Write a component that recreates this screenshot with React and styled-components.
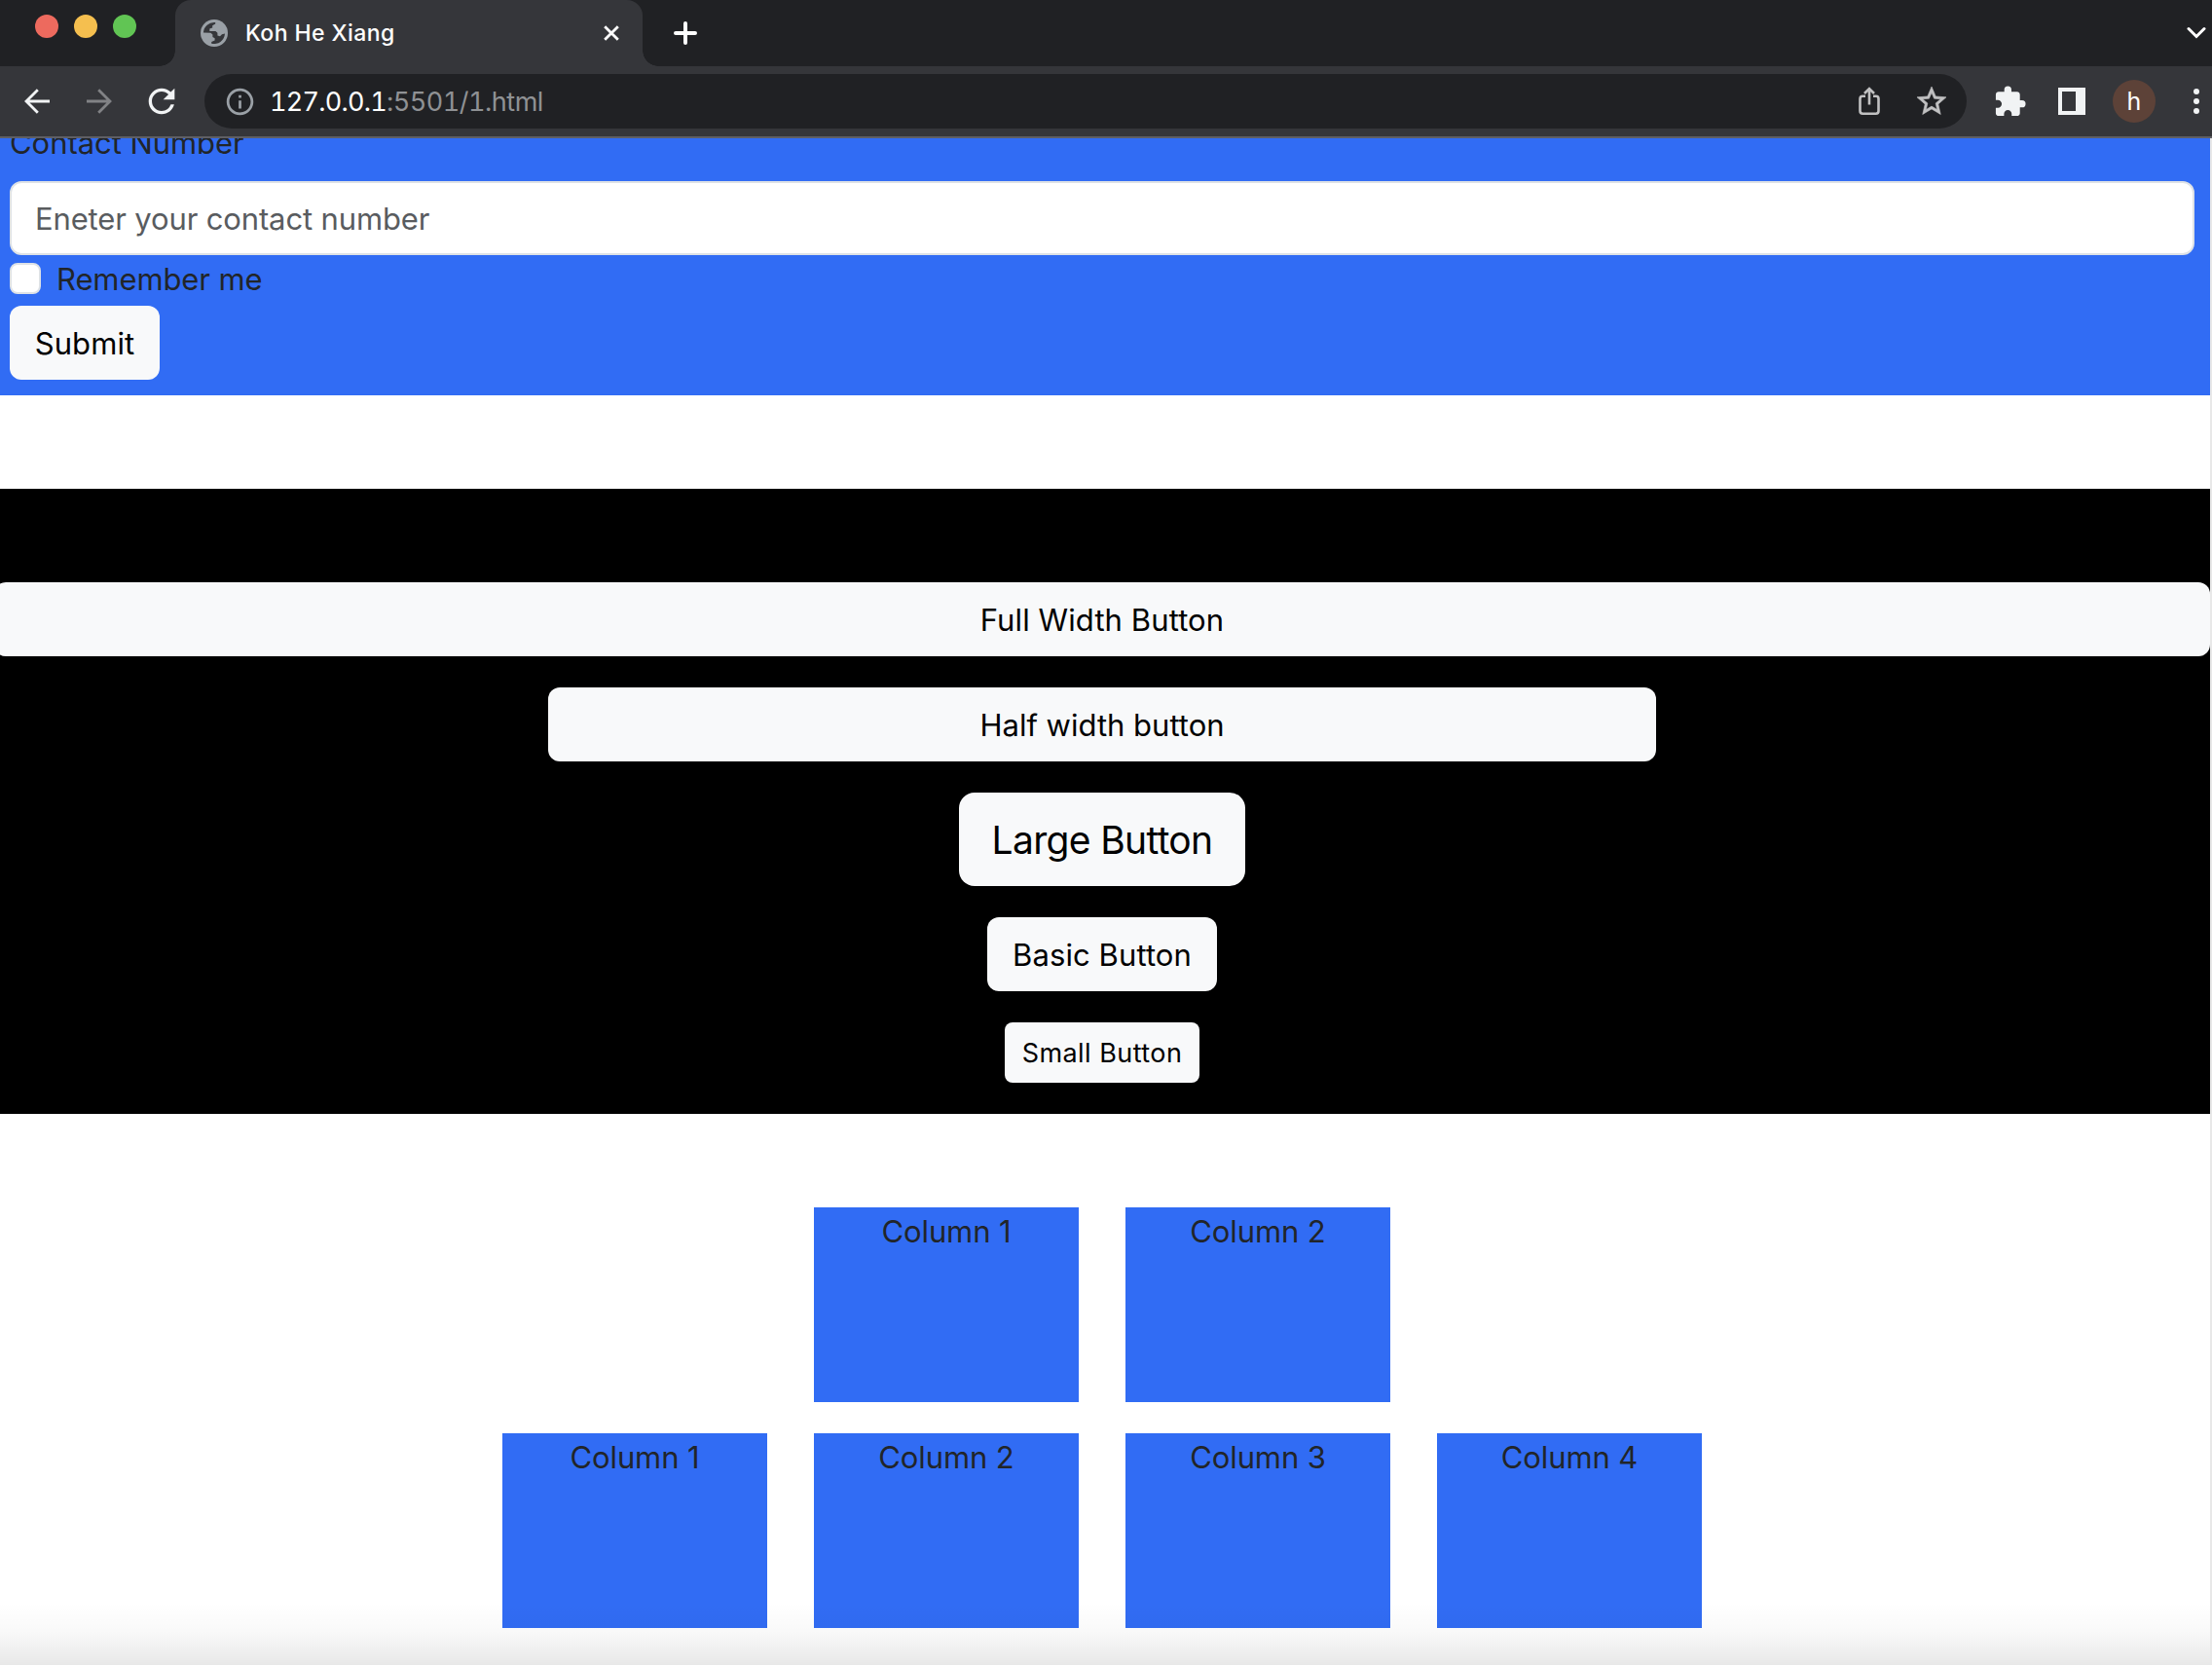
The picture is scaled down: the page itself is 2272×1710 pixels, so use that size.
import React from "react";
import styled, { createGlobalStyle } from "styled-components";
import { MdRefresh, MdInfoOutline, MdExtension } from "react-icons/md";

const GlobalStyle = createGlobalStyle`
  *, *::before, *::after { box-sizing: border-box; }
  body {
    margin: 0;
    overflow: hidden;
    font-family: Inter, "Liberation Sans", sans-serif;
    font-size: 31px;
    line-height: 48px;
    color: #212529;
    background: #fff;
  }
  svg { display: block; flex: none; }
`;

const Browser = styled.div`
  display: flex;
  flex-direction: column;
  width: 2272px;
  height: 1710px;
`;

/* ---------- browser chrome ---------- */

const TabStrip = styled.header`
  display: flex;
  align-items: stretch;
  height: 68px;
  flex: none;
  background: #202124;
  color: #fff;
`;

const WindowControls = styled.div`
  display: flex;
  gap: 16px;
  width: 180px;
  padding: 15px 0 0 36px;
`;

const Light = styled.span`
  width: 24px;
  height: 24px;
  border-radius: 50%;
  background: ${(p) => p.$color};
`;

const Tab = styled.div`
  position: relative;
  display: flex;
  align-items: center;
  width: 480px;
  padding: 0 24px 0 26px;
  border-radius: 16px 16px 0 0;
  background: #35363a;

  &::before,
  &::after {
    content: "";
    position: absolute;
    bottom: 0;
    width: 16px;
    height: 16px;
  }
  &::before {
    right: 100%;
    background: radial-gradient(circle at 0 0, transparent 15.5px, #35363a 16px);
  }
  &::after {
    left: 100%;
    background: radial-gradient(circle at 100% 0, transparent 15.5px, #35363a 16px);
  }
`;

const TabTitle = styled.span`
  flex: 1;
  margin-left: 18px;
  font-size: 23px;
  font-weight: 450;
  letter-spacing: 0.42px;
  line-height: 32px;
`;

const NewTab = styled.div`
  display: flex;
  align-items: center;
  flex: 1;
  padding-left: 32px;
`;

const TabSearch = styled.div`
  display: flex;
  align-items: center;
  padding-right: 6px;
`;

const Toolbar = styled.div`
  display: flex;
  align-items: center;
  height: 74px;
  flex: none;
  padding: 0 13px 0 24px;
  border-bottom: 2px solid #5f5f64;
  background: #35363a;
`;

const NavButtons = styled.div`
  display: flex;
  align-items: center;
  width: 186px;
  color: #f1f3f4;
`;

const NavSlot = styled.span`
  width: ${(p) => p.$width}px;
  color: ${(p) => p.$color || "inherit"};
`;

const AddressBar = styled.div`
  display: flex;
  align-items: center;
  width: 1810px;
  height: 56px;
  padding: 0 18px 0 20px;
  border-radius: 28px;
  background: #202124;
  color: #9aa0a6;
`;

const Url = styled.div`
  flex: 1;
  margin-left: 14px;
  padding-top: 1px;
  font-size: 27px;
  font-variant-numeric: tabular-nums;
  letter-spacing: -0.5px;
  line-height: 40px;
  color: #8f9194;
`;

const Host = styled.span`
  color: #fff;
  letter-spacing: -0.75px;
`;

const BarActions = styled.div`
  display: flex;
  align-items: center;
  gap: 35px;
  color: #c1c1c2;
`;

const Extensions = styled.div`
  display: flex;
  align-items: center;
  margin-left: 27px;
  color: #f1f3f4;
`;

const SidePanelIcon = styled.span`
  width: 28px;
  height: 28px;
  margin: 0 28px 0 32px;
  border: solid #f1f3f4;
  border-width: 4px 10px 4px 4px;
`;

const Avatar = styled.span`
  width: 44px;
  height: 44px;
  margin-right: 39px;
  border-radius: 50%;
  background: #5d4238;
  color: #fff;
  font-size: 25px;
  line-height: 44px;
  text-align: center;
`;

/* ---------- page ---------- */

const Page = styled.main`
  position: relative;
  display: flex;
  flex-direction: column;
  flex: 1;
  min-height: 0;
  overflow: hidden;
  border-right: 2px solid #e8e8e8;

  &::after {
    content: "";
    position: absolute;
    inset: auto 0 0 0;
    height: 64px;
    background: linear-gradient(rgba(0, 0, 0, 0), rgba(0, 0, 0, 0.025) 45%, rgba(0, 0, 0, 0.09));
  }
`;

const ContactForm = styled.form`
  display: flex;
  flex-direction: column;
  align-items: flex-start;
  height: 264px;
  flex: none;
  padding: 0 16px 0 10px;
  background: #316cf4;
`;

const FieldLabel = styled.label`
  margin: -20px 0 16px;
  padding-top: 1px;
  height: 48px;
  letter-spacing: -0.05px;
`;

const TextInput = styled.input`
  width: 100%;
  height: 76px;
  padding: 1px 24px 0;
  border: 2px solid #dee2e6;
  border-radius: 12px;
  background: #fff;
  font: inherit;
  letter-spacing: -0.14px;

  &::placeholder {
    color: #595c5f;
    opacity: 1;
  }
`;

const CheckRow = styled.label`
  display: flex;
  align-items: center;
  gap: 16px;
  height: 48px;
  margin-bottom: 4px;
  letter-spacing: -0.1px;
`;

const CheckText = styled.span`
  padding-top: 2px;
`;

const CheckBox = styled.input`
  appearance: none;
  width: 32px;
  height: 32px;
  margin: 0;
  border: 2px solid #dee2e6;
  border-radius: 8px;
  background: #fff;
`;

const sizes = {
  small: { height: 62, font: 27, radius: 8, spacing: 0.45 },
  basic: { height: 76, font: 31, radius: 12, spacing: 0.1 },
  large: { height: 96, font: 39, radius: 16, spacing: -0.65 },
};

const Button = styled.button`
  flex: none;
  width: ${(p) => p.$width}px;
  height: ${(p) => sizes[p.$size || "basic"].height}px;
  padding: 1px 0 0;
  border: 0;
  border-radius: ${(p) => sizes[p.$size || "basic"].radius}px;
  background: #f8f9fa;
  color: #000;
  font-family: inherit;
  font-size: ${(p) => sizes[p.$size || "basic"].font}px;
  letter-spacing: ${(p) => p.$spacing ?? sizes[p.$size || "basic"].spacing}px;
  line-height: 48px;
  text-align: center;
`;

const ButtonStack = styled.section`
  display: flex;
  flex-direction: column;
  align-items: center;
  gap: 32px;
  height: 642px;
  flex: none;
  margin: 96px 0 96px;
  padding: 96px 6px 32px 0;
  background: #000;
`;

const Grid = styled.section`
  display: flex;
  flex-direction: column;
  gap: 32px;
  padding-right: 6px;
`;

const GridRow = styled.div`
  display: flex;
  justify-content: center;
  gap: 48px;
`;

const Column = styled.div`
  width: 272px;
  height: 200px;
  padding-top: 1px;
  background: #316cf4;
  text-align: center;
  letter-spacing: -0.1px;
`;

/* ---------- icons ---------- */

const Stroke = ({ w, h, d, width = 2.8, cap = "butt" }) => (
  <svg width={w} height={h} viewBox={`0 0 ${w} ${h}`} fill="none" stroke="currentColor" strokeWidth={width} strokeLinecap={cap}>
    <path d={d} />
  </svg>
);

const Globe = () => (
  <svg width="28" height="28" viewBox="0 0 28 28">
    <circle cx="14" cy="14" r="14" fill="#9aa0a6" />
    <path
      fill="#35363a"
      d="M2.9 13.6A11.1 11.1 0 0 1 15.2 3V4.6L12.2 6.2V8.6L9.3 9.6V11.9H15.4L17.4 13.8V16.4L20 17.2L22 15.2L25 14.6A11.1 11.1 0 0 1 11.2 24.7V23L14.6 21.4V19.2L12.4 18V15.6L10.4 13.8Z"
    />
  </svg>
);

const Share = () => (
  <svg width="22" height="30" viewBox="0 0 22 30" fill="none" stroke="currentColor" strokeWidth="2.6">
    <path d="M7 9.8H4.2Q1.5 9.8 1.5 12.5V25Q1.5 27.7 4.2 27.7H17.8Q20.5 27.7 20.5 25V12.5Q20.5 9.8 17.8 9.8H15M11 18.5V2.5M6 7L11 2L16 7" />
  </svg>
);

const Star = () => (
  <svg width="36" height="36" viewBox="0 0 24 24" fill="currentColor" stroke="currentColor" strokeWidth="0.4">
    <path d="M22 9.24l-7.19-.62L12 2 9.19 8.63 2 9.24l5.46 4.73L5.82 21 12 17.27 18.18 21l-1.63-7.03L22 9.24zM12 15.4l-3.76 2.27 1-4.28-3.32-2.88 4.38-.38L12 6.1l1.71 4.04 4.38.38-3.32 2.88 1 4.28L12 15.4z" />
  </svg>
);

const MenuDots = () => (
  <svg width="6" height="26" viewBox="0 0 6 26" fill="currentColor">
    <circle cx="3" cy="3" r="3" />
    <circle cx="3" cy="13" r="3" />
    <circle cx="3" cy="23" r="3" />
  </svg>
);

export default function App() {
  return (
    <Browser>
      <GlobalStyle />
      <TabStrip>
        <WindowControls>
          <Light $color="#ed6a5e" />
          <Light $color="#f5bf4f" />
          <Light $color="#61c554" />
        </WindowControls>
        <Tab>
          <Globe />
          <TabTitle>Koh He Xiang</TabTitle>
          <Stroke w={16} h={16} d="M1.2 1.2L14.8 14.8M14.8 1.2L1.2 14.8" />
        </Tab>
        <NewTab>
          <Stroke w={24} h={24} width={4} cap="round" d="M12 2V22M2 12H22" />
        </NewTab>
        <TabSearch>
          <Stroke w={20} h={14} width={3} cap="round" d="M2 2.5L10 10.5L18 2.5" />
        </TabSearch>
      </TabStrip>

      <Toolbar>
        <NavButtons>
          <NavSlot $width={64}>
            <Stroke w={28} h={26} d="M27 13H3M14.8 1.2L3 13L14.8 24.8" />
          </NavSlot>
          <NavSlot $width={58} $color="#818285">
            <Stroke w={28} h={26} d="M1 13H25M13.2 1.2L25 13L13.2 24.8" />
          </NavSlot>
          <MdRefresh size={40} />
        </NavButtons>
        <AddressBar>
          <MdInfoOutline size={33} />
          <Url>
            <Host>127.0.0.1</Host>:5501/1.html
          </Url>
          <BarActions>
            <Share />
            <Star />
          </BarActions>
        </AddressBar>
        <Extensions>
          <MdExtension size={35} />
          <SidePanelIcon />
          <Avatar>h</Avatar>
          <MenuDots />
        </Extensions>
      </Toolbar>

      <Page>
        <ContactForm>
          <FieldLabel>Contact Number</FieldLabel>
          <TextInput placeholder="Eneter your contact number" />
          <CheckRow>
            <CheckBox type="checkbox" />
            <CheckText>Remember me</CheckText>
          </CheckRow>
          <Button type="button" $width={154}>Submit</Button>
        </ContactForm>

        <ButtonStack>
          <Button $width={2276}>Full Width Button</Button>
          <Button $width={1138} $spacing={0}>Half width button</Button>
          <Button $width={294} $size="large">Large Button</Button>
          <Button $width={236}>Basic Button</Button>
          <Button $width={200} $size="small">Small Button</Button>
        </ButtonStack>

        <Grid>
          <GridRow>
            <Column>Column 1</Column>
            <Column>Column 2</Column>
          </GridRow>
          <GridRow>
            <Column>Column 1</Column>
            <Column>Column 2</Column>
            <Column>Column 3</Column>
            <Column>Column 4</Column>
          </GridRow>
        </Grid>
      </Page>
    </Browser>
  );
}
